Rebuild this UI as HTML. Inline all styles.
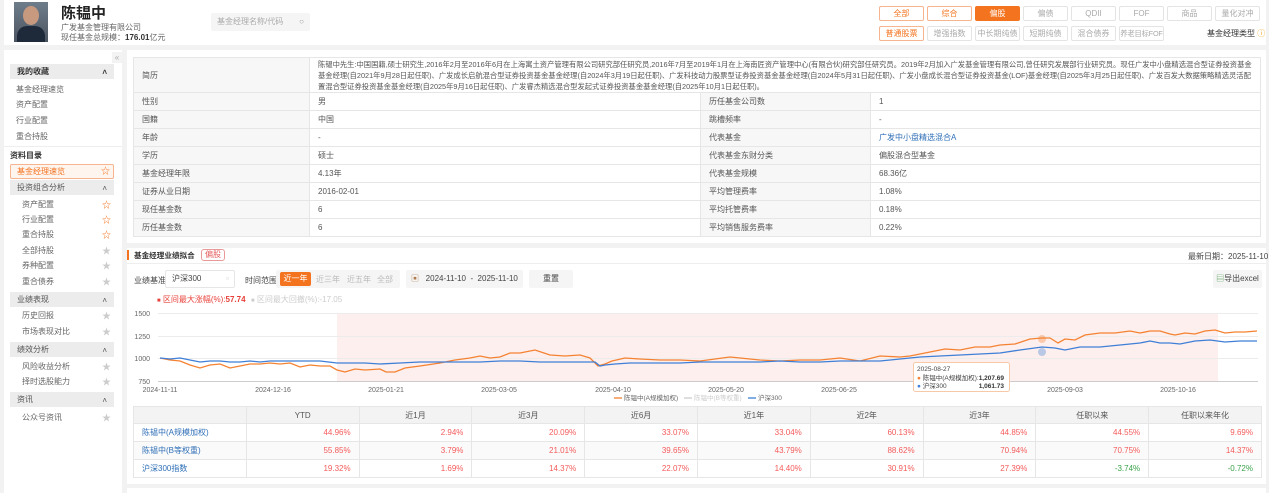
<!DOCTYPE html>
<html><head><meta charset="utf-8"><style>
*{margin:0;padding:0;box-sizing:border-box}
body{width:1269px;height:493px;background:#f2f2f2;font-family:"Liberation Sans","Noto Sans CJK SC",sans-serif;font-size:8px;color:#333;position:relative;overflow:hidden}
.a{position:absolute;white-space:nowrap}
.btn{position:absolute;height:15px;border:1px solid #e4e4e4;border-radius:2px;color:#aaa;text-align:center;line-height:13px;font-size:8px;width:45px;background:#fff;white-space:nowrap;overflow:hidden}
.bo{border-color:#f6b48f;color:#f3731f}
.bf{background:#f3731f;border-color:#f3731f;color:#fff}
.sh{position:absolute;left:10px;width:104px;height:15px;background:#ececec;line-height:15px;padding-left:7px;color:#555}
.sh:after{content:"˄";position:absolute;right:7px;top:1px;font-size:8px}
.si{position:absolute;left:22px;color:#666}
.st{position:absolute;left:102px;font-size:9px;color:#ccc}
.so{color:#f3731f}
table{border-collapse:collapse;position:absolute}
td{border:1px solid #e6e6e6;padding:0 8px;height:18px;color:#555;font-size:8px}
.lb{background:#f7f7f7}
.pt{table-layout:fixed}
.pt td{text-align:right;color:#f45b5b}
.pt td.n{text-align:left;color:#2f6fb7}
.pt tr:nth-child(odd) td{background:#fafafa}
.pt th{background:#f3f3f3;border:1px solid #e6e6e6;font-weight:normal;color:#555;height:17px;width:112.8px}
</style></head><body>
<!-- header -->
<div class="a" style="left:4px;top:0;width:1262px;height:45px;background:#fff"></div>
<div class="a" style="left:14px;top:2px;width:34px;height:40px;background:linear-gradient(#6f7d8a,#4b5560)"></div>
<div class="a" style="left:23px;top:6px;width:16px;height:19px;border-radius:50%;background:#c79a7f"></div>
<div class="a" style="left:17px;top:26px;width:28px;height:16px;border-radius:10px 10px 0 0;background:#1e2a3a"></div>
<div class="a" style="left:61px;top:2px;font-size:15px;font-weight:bold;color:#222">陈韫中</div>
<div class="a" style="left:61px;top:22px;color:#666">广发基金管理有限公司</div>
<div class="a" style="left:61px;top:32px;color:#666">现任基金总规模：<b style="color:#333">176.01</b>亿元</div>
<div class="a" style="left:211px;top:13px;width:99px;height:18px;background:#f5f5f5;border-radius:2px;color:#aaa;line-height:18px;padding-left:6px">基金经理名称/代码<span style="position:absolute;right:6px;color:#999">○</span></div>
<div class="btn bo" style="left:879px;top:6px">全部</div>
<div class="btn bo" style="left:927px;top:6px">综合</div>
<div class="btn bf" style="left:975px;top:6px">偏股</div>
<div class="btn" style="left:1023px;top:6px">偏债</div>
<div class="btn" style="left:1071px;top:6px">QDII</div>
<div class="btn" style="left:1119px;top:6px">FOF</div>
<div class="btn" style="left:1167px;top:6px">商品</div>
<div class="btn" style="left:1215px;top:6px">量化对冲</div>
<div class="btn bo" style="left:879px;top:26px">普通股票</div>
<div class="btn" style="left:927px;top:26px">增强指数</div>
<div class="btn" style="left:975px;top:26px">中长期纯债</div>
<div class="btn" style="left:1023px;top:26px">短期纯债</div>
<div class="btn" style="left:1071px;top:26px">混合债券</div>
<div class="btn" style="left:1119px;top:26px;font-size:7.3px;letter-spacing:-0.2px">养老目标FOF</div>
<div class="a" style="left:1207px;top:28px;color:#333">基金经理类型 <span style="color:#f3a21f">ⓘ</span></div>
<!-- sidebar -->
<div class="a" style="left:4px;top:50px;width:118px;height:443px;background:#fff"></div>
<div class="a" style="left:112px;top:52px;width:10px;height:11px;background:#f3f3f3;color:#aaa;text-align:center;line-height:11px">«</div>
<div class="sh" style="top:64px;font-weight:bold;color:#333">我的收藏</div>
<div class="si" style="left:16px;top:84px">基金经理速览</div>
<div class="si" style="left:16px;top:99px">资产配置</div>
<div class="si" style="left:16px;top:115px">行业配置</div>
<div class="si" style="left:16px;top:131px">重合持股</div>
<div class="a" style="left:4px;top:146px;width:118px;height:1px;background:#eee"></div>
<div class="a" style="left:10px;top:150px;font-weight:bold;color:#333">资料目录</div>
<div class="a" style="left:10px;top:164px;width:104px;height:15px;border:1px solid #f6b48f;background:#fff5ef;border-radius:2px;color:#f3731f;line-height:13px;padding-left:6px">基金经理速览<span style="position:absolute;right:3px;font-size:9px">☆</span></div>
<div class="sh" style="top:180px">投资组合分析</div>
<div class="si" style="top:199px">资产配置</div><div class="st so" style="top:198px">☆</div>
<div class="si" style="top:214px">行业配置</div><div class="st so" style="top:213px">☆</div>
<div class="si" style="top:229px">重合持股</div><div class="st so" style="top:228px">☆</div>
<div class="si" style="top:245px">全部持股</div><div class="st" style="top:244px">★</div>
<div class="si" style="top:260px">券种配置</div><div class="st" style="top:259px">★</div>
<div class="si" style="top:276px">重合债券</div><div class="st" style="top:275px">★</div>
<div class="sh" style="top:292px">业绩表现</div>
<div class="si" style="top:310px">历史回报</div><div class="st" style="top:309px">★</div>
<div class="si" style="top:326px">市场表现对比</div><div class="st" style="top:325px">★</div>
<div class="sh" style="top:342px">绩效分析</div>
<div class="si" style="top:361px">风险收益分析</div><div class="st" style="top:360px">★</div>
<div class="si" style="top:376px">择时选股能力</div><div class="st" style="top:375px">★</div>
<div class="sh" style="top:392px">资讯</div>
<div class="si" style="top:412px">公众号资讯</div><div class="st" style="top:411px">★</div>
<!-- main info -->
<div class="a" style="left:127px;top:50px;width:1139px;height:193px;background:#fff"></div>
<table style="left:133px;top:57px;width:1128px">
<tr><td class="lb" style="width:176px;height:35px">简历</td><td colspan="3" style="line-height:11px;font-size:7.3px;white-space:normal">陈韫中先生:中国国籍,硕士研究生,2016年2月至2016年6月在上海寓土资产管理有限公司研究部任研究员,2016年7月至2019年1月在上海南匠资产管理中心(有限合伙)研究部任研究员。2019年2月加入广发基金管理有限公司,曾任研究发展部行业研究员。现任广发中小盘精选混合型证券投资基金基金经理(自2021年9月28日起任职)、广发成长启航混合型证券投资基金基金经理(自2024年3月19日起任职)、广发科技动力股票型证券投资基金基金经理(自2024年5月31日起任职)、广发小盘成长混合型证券投资基金(LOF)基金经理(自2025年3月25日起任职)、广发百发大数据策略精选灵活配置混合型证券投资基金基金经理(自2025年9月16日起任职)、广发睿杰精选混合型发起式证券投资基金基金经理(自2025年10月1日起任职)。</td></tr>
<tr><td class="lb">性别</td><td style="width:391px">男</td><td class="lb" style="width:170px">历任基金公司数</td><td>1</td></tr>
<tr><td class="lb">国籍</td><td>中国</td><td class="lb">跳槽频率</td><td>-</td></tr>
<tr><td class="lb">年龄</td><td>-</td><td class="lb">代表基金</td><td style="color:#2f6fb7">广发中小盘精选混合A</td></tr>
<tr><td class="lb">学历</td><td>硕士</td><td class="lb">代表基金东财分类</td><td>偏股混合型基金</td></tr>
<tr><td class="lb">基金经理年限</td><td>4.13年</td><td class="lb">代表基金规模</td><td>68.36亿</td></tr>
<tr><td class="lb">证券从业日期</td><td>2016-02-01</td><td class="lb">平均管理费率</td><td>1.08%</td></tr>
<tr><td class="lb">现任基金数</td><td>6</td><td class="lb">平均托管费率</td><td>0.18%</td></tr>
<tr><td class="lb">历任基金数</td><td>6</td><td class="lb">平均销售服务费率</td><td>0.22%</td></tr>
</table>
<!-- section 2 -->
<div class="a" style="left:127px;top:248px;width:1139px;height:236px;background:#fff"></div>
<div class="a" style="left:127px;top:250px;width:2px;height:10px;background:#f3731f"></div>
<div class="a" style="left:134px;top:250px;font-weight:bold;color:#333;font-size:7.6px">基金经理业绩拟合</div>
<div class="a" style="left:201px;top:249px;width:24px;height:12px;border:1px solid #e89a9a;border-radius:3px;color:#e45c5c;text-align:center;line-height:10px">偏股</div>
<div class="a" style="left:1188px;top:251px;color:#444">最新日期：2025-11-10</div>
<div class="a" style="left:127px;top:263px;width:1139px;height:1px;background:#eee"></div>
<div class="a" style="left:134px;top:275px;color:#444">业绩基准</div>
<div class="a" style="left:165px;top:270px;width:70px;height:18px;border:1px solid #e6e6e6;border-radius:2px;padding-left:6px;line-height:16px;color:#444">沪深300<span style="position:absolute;right:5px;color:#ccc">▫</span></div>
<div class="a" style="left:245px;top:275px;color:#444">时间范围</div>
<div class="a" style="left:276px;top:270px;width:124px;height:18px;background:#f5f5f5;border-radius:2px"></div>
<div class="a" style="left:280px;top:272px;width:31px;height:14px;background:#f3731f;color:#fff;text-align:center;line-height:14px;border-radius:2px">近一年</div>
<div class="a" style="left:316px;top:274px;color:#bbb">近三年</div>
<div class="a" style="left:347px;top:274px;color:#bbb">近五年</div>
<div class="a" style="left:377px;top:274px;color:#bbb">全部</div>
<div class="a" style="left:406px;top:270px;width:117px;height:18px;background:#f5f5f5;border-radius:2px;line-height:18px;padding-left:5px;color:#444"><span style="color:#b07a4a">▣</span>&nbsp;&nbsp;&nbsp;2024-11-10 &nbsp;-&nbsp; 2025-11-10</div>
<div class="a" style="left:529px;top:270px;width:44px;height:18px;background:#f5f5f5;border-radius:2px;text-align:center;line-height:18px;color:#444">重置</div>
<div class="a" style="left:1213px;top:270px;width:49px;height:18px;background:#f5f5f5;border-radius:2px;text-align:center;line-height:18px;color:#444"><span style="color:#4a9a4a">▤</span>导出excel</div>
<div class="a" style="left:157px;top:294px;color:#e8413b"><span style="font-size:6px">■</span> 区间最大涨幅(%):<b>57.74</b></div>
<div class="a" style="left:251px;top:294px;color:#ccc"><span style="font-size:6px">■</span> 区间最大回撤(%):-17.05</div>
<svg class="a" style="left:127px;top:305px" width="1139" height="100" viewBox="127 305 1139 100">
<rect x="337" y="313" width="881" height="68" fill="#fcefed"/>
<g stroke="#ececec" stroke-width="1"><line x1="158" y1="313.5" x2="1258" y2="313.5"/><line x1="158" y1="336.5" x2="1258" y2="336.5"/><line x1="158" y1="358.5" x2="1258" y2="358.5"/></g>
<line x1="158" y1="381.5" x2="1258" y2="381.5" stroke="#ccc"/>
<g font-size="7" fill="#666" font-family="Liberation Sans"><text x="150" y="316" text-anchor="end">1500</text><text x="150" y="339" text-anchor="end">1250</text><text x="150" y="361" text-anchor="end">1000</text><text x="150" y="384" text-anchor="end">750</text>
<text x="160" y="392" text-anchor="middle">2024-11-11</text><text x="273" y="392" text-anchor="middle">2024-12-16</text><text x="386" y="392" text-anchor="middle">2025-01-21</text><text x="499" y="392" text-anchor="middle">2025-03-05</text><text x="613" y="392" text-anchor="middle">2025-04-10</text><text x="726" y="392" text-anchor="middle">2025-05-20</text><text x="839" y="392" text-anchor="middle">2025-06-25</text><text x="1065" y="392" text-anchor="middle">2025-09-03</text><text x="1178" y="392" text-anchor="middle">2025-10-16</text></g>
<polyline fill="none" stroke="#f58232" stroke-width="1.3" points="160,358 170,360 180,361 190,365 200,368 210,365 220,364 230,368 240,366 250,364 260,364 270,363 280,364 290,363 300,367 310,365 320,366 330,366 337,370 345,372 355,369 365,370 380,369 386,372 395,372 405,368 420,366 440,363 455,360 470,358 480,356 490,358 500,357 510,353 520,353 535,350 550,355 565,356 580,355 590,358 598,366 605,364 612,361 625,358 640,359 660,360 680,360 700,361 715,359 730,357 740,358 760,360 780,361 800,360 820,360 840,358 860,361 880,356 900,357 910,356 930,352 945,349 960,350 975,347 990,347 1000,345 1015,344 1030,339 1042,338 1050,338 1058,343 1065,339 1075,340 1085,335 1100,333 1115,333 1130,331 1140,333 1150,331 1160,331 1170,334 1175,335 1185,333 1195,334 1205,331 1215,330 1225,333 1235,332 1245,332 1257,331"/>
<polyline fill="none" stroke="#3f7fd8" stroke-width="1.3" points="160,358 170,359 180,358 190,360 200,362 210,361 220,361 230,362 240,362 250,361 260,362 270,361 280,361 300,361 320,361 337,363 350,363 365,363 380,364 400,363 420,362 440,362 460,362 480,362 500,361 520,361 540,362 560,362 580,362 595,362 600,366 605,365 615,364 630,363 650,363 680,363 700,362 720,362 740,362 760,362 780,361 800,362 820,362 840,361 860,361 880,361 900,359 920,357 940,356 960,355 980,354 1000,353 1020,350 1042,347 1055,348 1065,350 1080,347 1100,347 1120,345 1140,343 1150,341 1160,343 1170,343 1180,344 1195,341 1210,340 1225,342 1240,341 1257,341"/>
<circle cx="1042" cy="339" r="4" fill="#f58232" opacity=".35"/><circle cx="1042" cy="352" r="4" fill="#3f7fd8" opacity=".35"/>
<rect x="913.5" y="362.5" width="96" height="29" rx="2" fill="#fff" stroke="#f6c9a8"/>
<g font-size="6.5" font-family="Liberation Sans,Noto Sans CJK SC"><text x="917" y="371" fill="#444">2025-08-27</text><text x="917" y="380" fill="#444"><tspan fill="#f58232">●</tspan> 陈韫中(A规模加权):</text><text x="1004" y="380" text-anchor="end" font-weight="bold" fill="#333">1,207.69</text><text x="917" y="388" fill="#444"><tspan fill="#3f7fd8">●</tspan> 沪深300</text><text x="1004" y="388" text-anchor="end" font-weight="bold" fill="#333">1,061.73</text></g>
<g font-size="6.5" font-family="Liberation Sans,Noto Sans CJK SC" fill="#666"><line x1="614" y1="398" x2="622" y2="398" stroke="#f58232" stroke-width="1.3"/><text x="624" y="400">陈韫中(A规模加权)</text><line x1="684" y1="398" x2="692" y2="398" stroke="#ccc" stroke-width="1.3"/><text x="694" y="400" fill="#ccc">陈韫中(B等权重)</text><line x1="748" y1="398" x2="756" y2="398" stroke="#3f7fd8" stroke-width="1.3"/><text x="758" y="400">沪深300</text></g>
</svg>
<table class="pt" style="left:133px;top:406px;width:1128px">
<tr><th></th><th>YTD</th><th>近1月</th><th>近3月</th><th>近6月</th><th>近1年</th><th>近2年</th><th>近3年</th><th>任职以来</th><th>任职以来年化</th></tr>
<tr><td class="n">陈韫中(A规模加权)</td><td>44.96%</td><td>2.94%</td><td>20.09%</td><td>33.07%</td><td>33.04%</td><td>60.13%</td><td>44.85%</td><td>44.55%</td><td>9.69%</td></tr>
<tr><td class="n">陈韫中(B等权重)</td><td>55.85%</td><td>3.79%</td><td>21.01%</td><td>39.65%</td><td>43.79%</td><td>88.62%</td><td>70.94%</td><td>70.75%</td><td>14.37%</td></tr>
<tr><td class="n">沪深300指数</td><td>19.32%</td><td>1.69%</td><td>14.37%</td><td>22.07%</td><td>14.40%</td><td>30.91%</td><td>27.39%</td><td style="color:#3aa24a">-3.74%</td><td style="color:#3aa24a">-0.72%</td></tr>
</table>
<div class="a" style="left:127px;top:488px;width:1139px;height:5px;background:#fff"></div>
</body></html>
